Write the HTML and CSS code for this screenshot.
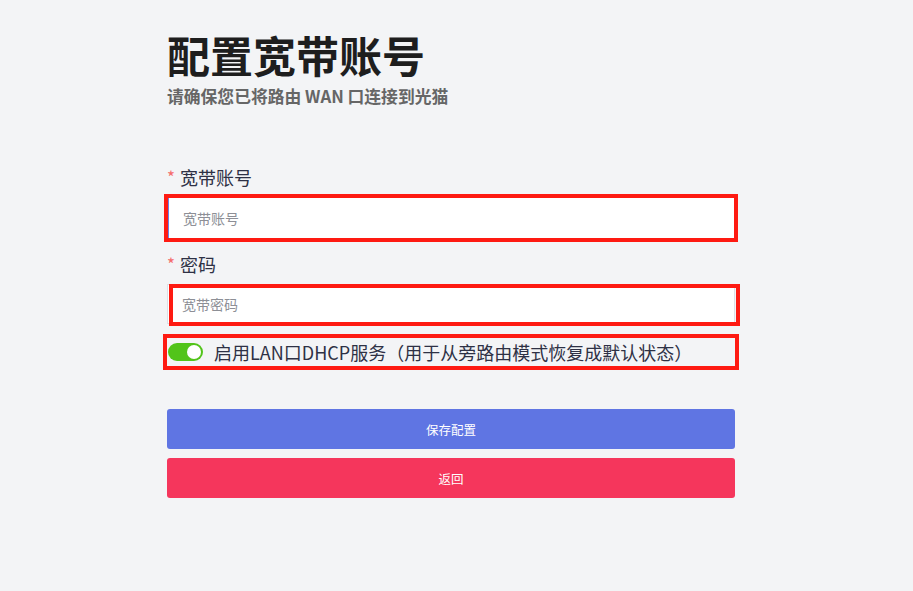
FILE: index.html
```html
<!DOCTYPE html>
<html lang="zh-CN">
<head>
<meta charset="utf-8">
<title>配置宽带账号</title>
<link rel="stylesheet" href="styles.css">
</head>
<body>
<main class="page">
  <h1 class="title">配置宽带账号</h1>
  <p class="subtitle">请确保您已将路由 WAN 口连接到光猫</p>
  <form class="form">
    <label class="label label-first"><span class="req">*</span>宽带账号</label>
    <div class="field mark mark-a">
      <input class="input input-focus" type="text" placeholder="宽带账号">
    </div>
    <label class="label"><span class="req">*</span>密码</label>
    <div class="field mark mark-b">
      <input class="input" type="password" placeholder="宽带密码">
    </div>
    <div class="switch-row mark mark-c">
      <span class="switch"><span class="knob"></span></span>
      <span class="switch-text">启用LAN口DHCP服务（用于从旁路由模式恢复成默认状态）</span>
    </div>
    <button type="button" class="btn btn-save">保存配置</button>
    <button type="button" class="btn btn-back">返回</button>
  </form>
</main>
</body>
</html>
```

FILE: styles.css
```css
html, body {
  margin: 0;
  padding: 0;
  background: #f3f4f6;
}
body {
  font-family: "Noto Sans CJK SC", "Noto Sans", sans-serif;
  color: #2c2f3e;
}
.page {
  width: 568px;
  padding: 28px 0 0 167px;
}
.title {
  margin: 0;
  font-size: 43px;
  line-height: 52px;
  font-weight: 700;
  color: #1e1e1e;
}
.subtitle {
  margin: 4px 0 0;
  font-size: 16.8px;
  line-height: 24px;
  font-weight: 700;
  color: #666666;
}
.form {
  display: flex;
  flex-direction: column;
  margin-top: 57px;
}
.label {
  display: flex;
  align-items: center;
  height: 24px;
  font-size: 18px;
  line-height: 24px;
  color: #2e3145;
  margin-top: 15px;
}
.label-first { margin-top: 0; }
.req {
  color: #f56c6c;
  font-size: 17px;
  line-height: 24px;
  margin-right: 5px;
}
.field {
  margin-top: 8px;
  height: 40px;
}
.input {
  box-sizing: border-box;
  width: 100%;
  height: 40px;
  border: 1px solid #dcdfe6;
  background: #ffffff;
  padding: 0 14px;
  font-family: inherit;
  font-size: 14px;
  color: #333;
  outline: none;
}
.input::placeholder { color: #8d8f96; }
.input-focus {
  height: 42px;
  border-color: #ffffff;
  border-left: 2px solid #6c7fe6;
}
.mark { position: relative; }
.mark::after {
  content: "";
  position: absolute;
  border: 4px solid #fe1a12;
  pointer-events: none;
}
.mark-a::after { left: -3px; right: -3px; top: -3px; bottom: -5px; }
.mark-b::after { left: 2px; right: -5px; top: 0; bottom: -2px; }
.mark-c::after { left: -4px; right: -4px; top: -6px; bottom: -6px; }
.switch-row {
  margin-top: 16px;
  height: 24px;
  display: flex;
  align-items: center;
}
.switch {
  display: inline-flex;
  align-items: center;
  justify-content: flex-end;
  box-sizing: border-box;
  width: 35px;
  height: 18px;
  margin-left: 1px;
  padding: 2px;
  border-radius: 9px;
  background: #52c41a;
}
.knob {
  width: 14px;
  height: 14px;
  border-radius: 50%;
  background: #ffffff;
}
.switch-text {
  margin-left: 11px;
  font-size: 18px;
  line-height: 24px;
  color: #2e3145;
}
.btn {
  display: block;
  width: 100%;
  height: 40px;
  border: none;
  border-radius: 3px;
  color: #ffffff;
  font-family: inherit;
  font-size: 12.5px;
  cursor: pointer;
}
.btn-save {
  margin-top: 45px;
  background: #5f75e3;
}
.btn-back {
  margin-top: 9px;
  background: #f5365c;
}
```
